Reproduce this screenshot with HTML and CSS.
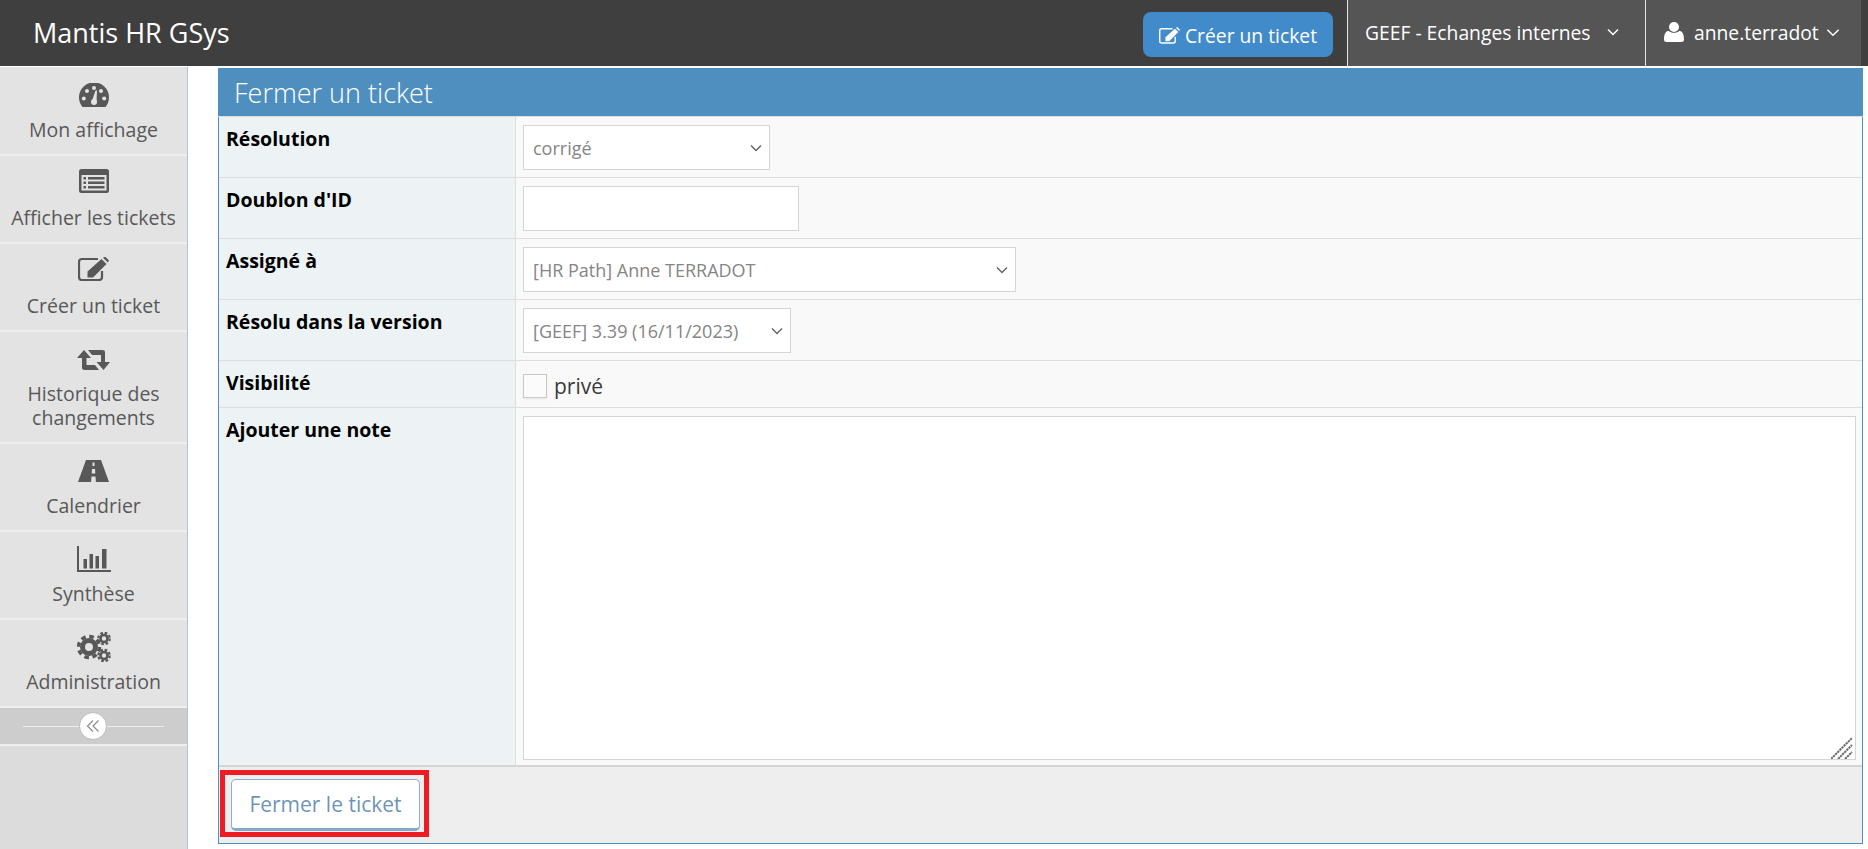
FILE: index.html
```html
<!DOCTYPE html>
<html lang="fr">
<head>
<meta charset="utf-8">
<title>Fermer un ticket</title>
<link rel="stylesheet" href="styles.css">
</head>
<body>
<svg class="sprite" width="0" height="0">
  <symbol id="i-edit" viewBox="0 0 31 24">
    <path d="M24 14v6a3 3 0 0 1-3 3H4a3 3 0 0 1-3-3V5a3 3 0 0 1 3-3h16" fill="none" stroke="currentColor" stroke-width="2.200"/>
    <path d="M9.500 14.500 23.500 2 28.500 7 15 20.500H9.500zM25 .8 27 -.5 31 3.500 29.800 5.500z" fill="currentColor"/>
  </symbol>
</svg>
<header class="topbar">
  <div class="brand">Mantis HR GSys</div>
  <button class="create-btn" type="button"><svg class="create-icon"><use href="#i-edit"/></svg><span>Créer un ticket</span></button>
  <div class="nav-item nav-project"><span>GEEF - Echanges internes</span>
    <svg class="chev" viewBox="0 0 12 8"><path d="M1 1.500 6 6.500 11 1.500" fill="none" stroke="currentColor" stroke-width="1.500"/></svg>
  </div>
  <div class="nav-item nav-user">
    <svg class="user-icon" viewBox="0 0 20 20"><circle cx="10" cy="5" r="5" fill="currentColor"/><path d="M2.500 20A2.500 2.500 0 0 1 0 17.500C0 13 1 9.500 4.500 8.700 6 10 8 10.800 10 10.800s4-.8 5.500-2.100C19 9.500 20 13 20 17.500a2.500 2.500 0 0 1-2.500 2.500z" fill="currentColor"/></svg>
    <span>anne.terradot</span>
    <svg class="chev" viewBox="0 0 12 8"><path d="M1 1.500 6 6.500 11 1.500" fill="none" stroke="currentColor" stroke-width="1.300"/></svg>
  </div>
</header>
<div class="layout">
  <nav class="sidebar">
    <a class="side-item side-item-first">
      <span class="icon-box"><svg class="icon-30" viewBox="0 0 30 24"><path d="M3.500 24A15 15 0 1 1 26.500 24z" fill="#585858"/><g fill="#e3e3e3"><circle cx="4.800" cy="15.500" r="2"/><circle cx="8" cy="8" r="2"/><circle cx="15" cy="5" r="2"/><circle cx="22" cy="8" r="2"/><circle cx="25.200" cy="15.500" r="2"/><circle cx="15" cy="19" r="3"/><path d="M13 18 16.500 7.500h1.500L17.500 19z"/></g></svg></span>
      <span>Mon affichage</span>
    </a>
    <a class="side-item">
      <span class="icon-box"><svg class="icon-30 icon-up" viewBox="0 0 30 24"><rect width="30" height="24" rx="2.500" fill="#585858"/><rect x="2.500" y="6" width="25" height="15.500" fill="#e3e3e3"/><g fill="#585858"><rect x="4.500" y="8" width="2.500" height="2.500"/><rect x="4.500" y="12.500" width="2.500" height="2.500"/><rect x="4.500" y="17" width="2.500" height="2.500"/><rect x="9" y="8" width="16.500" height="2.500"/><rect x="9" y="12.500" width="16.500" height="2.500"/><rect x="9" y="17" width="16.500" height="2.500"/></g></svg></span>
      <span>Afficher les tickets</span>
    </a>
    <a class="side-item">
      <span class="icon-box"><svg class="icon-edit icon-up"><use href="#i-edit"/></svg></span>
      <span>Créer un ticket</span>
    </a>
    <a class="side-item side-item-tall">
      <span class="icon-box"><svg class="icon-retweet" viewBox="0 0 33 20"><path fill="#585858" d="M7 0 14 8H9.500V15H18L22 20H7.500Q5 20 5 18V8H0zM26.500 20 19.500 12H24V5H15L11 0H25.500Q28 0 28 2V12H33z"/></svg></span>
      <span>Historique des<br>changements</span>
    </a>
    <a class="side-item">
      <span class="icon-box"><svg class="icon-road" viewBox="0 0 31 22"><path fill="#585858" d="M0 22 8 0H23L31 22z"/><path fill="#e3e3e3" d="M14.500 2.500h2V6h-2zM14 9h3l.3 4.500h-3.600zM13.500 16.500h4l.4 5.500h-4.800z"/></svg></span>
      <span>Calendrier</span>
    </a>
    <a class="side-item">
      <span class="icon-box"><svg class="icon-chart" viewBox="0 0 34 26"><path fill="#585858" d="M0 0h2v24h32v2H0z"/><g fill="#585858"><rect x="6.500" y="13" width="3.500" height="9.500"/><rect x="12.500" y="8" width="3.500" height="14.500"/><rect x="18.500" y="10" width="3.500" height="12.500"/><rect x="25" y="3" width="4.500" height="19.500"/></g></svg></span>
      <span>Synthèse</span>
    </a>
    <a class="side-item">
      <span class="icon-box"><svg class="icon-cogs" viewBox="0 0 34 30"><g fill="none" stroke="#585858"><circle cx="12" cy="15" r="6.500" stroke-width="5"/><circle cx="12" cy="15" r="10.500" stroke-width="3.500" stroke-dasharray="4.600 3.640"/><circle cx="27" cy="6.500" r="3.500" stroke-width="2.600"/><circle cx="27" cy="6.500" r="5.700" stroke-width="2.200" stroke-dasharray="2.600 1.880"/><circle cx="27" cy="23.500" r="3.500" stroke-width="2.600"/><circle cx="27" cy="23.500" r="5.700" stroke-width="2.200" stroke-dasharray="2.600 1.880"/></g></svg></span>
      <span>Administration</span>
    </a>
    <div class="collapse-bar">
      <span class="collapse-line"></span>
      <span class="collapse-btn"><svg viewBox="0 0 14 14" width="14" height="14"><path d="M7 1.500 1.500 7 7 12.500M12.500 1.500 7 7l5.500 5.500" fill="none" stroke="#8c8c8c" stroke-width="1.200"/></svg></span>
    </div>
  </nav>
  <main class="main">
    <form class="widget">
      <h1 class="widget-title">Fermer un ticket</h1>
      <div class="row row-std">
        <div class="label">Résolution</div>
        <div class="field"><select class="control w-res"><option>corrigé</option></select></div>
      </div>
      <div class="row row-std">
        <div class="label">Doublon d'ID</div>
        <div class="field"><input class="control w-id" type="text"></div>
      </div>
      <div class="row row-std">
        <div class="label">Assigné à</div>
        <div class="field"><select class="control w-assign"><option>[HR Path] Anne TERRADOT</option></select></div>
      </div>
      <div class="row row-std">
        <div class="label">Résolu dans la version</div>
        <div class="field"><select class="control w-ver"><option>[GEEF] 3.39 (16/11/2023)</option></select></div>
      </div>
      <div class="row row-vis">
        <div class="label">Visibilité</div>
        <div class="field field-check"><span class="checkbox"></span><span class="check-label">privé</span></div>
      </div>
      <div class="row row-note">
        <div class="label">Ajouter une note</div>
        <div class="field note-field">
          <textarea class="note"></textarea>
          <svg class="grip" viewBox="0 0 22 22"><path d="M0 22 21 1M7 22 21 8M14 22 21 15" fill="none" stroke="#6e6e6e" stroke-width="2" stroke-dasharray="2.400 .6"/></svg>
        </div>
      </div>
      <div class="footer">
        <div class="highlight"><button class="close-btn" type="button">Fermer le ticket</button></div>
      </div>
    </form>
  </main>
</div>
</body>
</html>
```

FILE: styles.css
```css
* { box-sizing: border-box; }
html, body { margin: 0; height: 849px; overflow: hidden; background: #fff; }
body { font-family: "Open Sans", "Noto Sans", sans-serif; font-size: 19.5px; color: #393939; }
.sprite { position: absolute; }

.topbar { display: flex; align-items: stretch; height: 66px; background: #3f3f3f; padding-right: 7px; color: #fff; font-size: 19.3px; }
.brand { flex: 1; font-size: 27px; line-height: 66px; padding-left: 33px; }
.create-btn { align-self: flex-start; margin: 12px 14px 0 0; height: 45px; width: 190px; padding: 1px 0 0; display: flex; align-items: center; justify-content: center; gap: 5px; background: #428bca; border: 0; border-radius: 8px; color: #fff; font: inherit; }
.create-icon { width: 21px; height: 17px; }
.nav-item { display: flex; align-items: center; background: #555; border-left: 1px solid #e4e4e4; padding-bottom: 2px; white-space: nowrap; }
.nav-project { width: 298px; padding-left: 17px; gap: 16px; }
.nav-user { width: 216px; padding-left: 18px; }
.chev { width: 12px; height: 8px; flex: none; }
.nav-user .chev { margin-left: 7px; width: 14px; height: 9px; }
.user-icon { width: 20px; height: 20px; margin-right: 10px; flex: none; }

.layout { display: flex; height: 783px; margin-top: 1px; }
.sidebar { width: 188px; flex: none; background: #dcdcdc; border-right: 1px solid #a9c5dc; }
.side-item { display: flex; flex-direction: column; align-items: center; height: 88px; background: #e3e3e3; border-bottom: 2px solid #efefef; color: #585858; text-align: center; line-height: 24px; padding-top: 11px; }
.side-item-first { height: 89px; padding-top: 12px; }
.side-item-tall { height: 112px; }
.icon-box { display: flex; align-items: center; justify-content: center; height: 31px; margin-bottom: 8px; flex: none; color: #585858; }
.icon-30 { width: 30px; height: 24px; }
.icon-up { margin-bottom: 3px; }
.icon-edit { width: 31px; height: 24px; }
.icon-retweet { width: 33px; height: 20px; margin-top: 2px; }
.icon-road { width: 31px; height: 22px; }
.icon-chart { width: 34px; height: 26px; }
.icon-cogs { width: 34px; height: 30px; }
.collapse-bar { position: relative; height: 38px; background: #cdcdcd; border-bottom: 2px solid #efefef; display: flex; align-items: center; justify-content: center; }
.collapse-line { width: 141px; height: 1px; background: #eee; }
.collapse-btn { position: absolute; left: 79px; top: 4px; width: 28px; height: 28px; border-radius: 50%; background: #fff; border: 1px solid #bbb; display: flex; align-items: center; justify-content: center; }

.main { flex: 1; padding: 1px 5px 0 30px; min-width: 0; }
.widget { display: flex; flex-direction: column; border: solid #4f8fc0; border-width: 0 1px 1px 1px; height: 776px; }
.widget-title { margin: 0 -1px; height: 49px; background: #4f8fc0; border-bottom: 1px solid #dddddd; color: #fff; font-size: 27px; font-weight: 300; line-height: 49px; padding-left: 16px; }
.row { display: flex; border-bottom: 1px solid #dddddd; }
.row-std { height: 61px; }
.row-vis { height: 47px; }
.row-note { height: 359px; border-bottom: 2px solid #d5d5d5; }
.label { width: 297px; flex: none; background: #edf3f4; border-right: 1px solid #dddddd; padding: 10px 7px; font-weight: 700; color: #000; line-height: 24px; }
.field { flex: 1; background: #f9f9f9; padding: 8px 6px 0 7px; }
.control { display: block; height: 45px; background: #fff; border: 1px solid #d5d5d5; border-radius: 0; font: inherit; font-size: 18px; color: #858585; padding: 0 9px; appearance: none; }
select.control { background-image: url("data:image/svg+xml,%3Csvg xmlns='http://www.w3.org/2000/svg' width='12' height='8'%3E%3Cpath d='M1 1.500 6 6.500 11 1.500' fill='none' stroke='%23666' stroke-width='1.500'/%3E%3C/svg%3E"); background-repeat: no-repeat; background-position: right 7px center; }
.w-res { width: 247px; }
.w-id { width: 276px; }
.w-assign { width: 493px; }
.w-ver { width: 268px; }
.field-check { display: flex; align-items: flex-start; gap: 7px; padding-top: 13px; }
.checkbox { width: 24px; height: 24px; background: #fbfbfb; border: 1px solid #c8c8c8; box-shadow: 0 1px 2px rgba(0,0,0,.08); }
.check-label { font-size: 21px; line-height: 24px; color: #393939; }
.note-field { position: relative; padding-top: 8px; }
.note { display: block; width: 100%; height: 344px; background: #fff; border: 1px solid #d5d5d5; resize: none; }
.grip { position: absolute; right: 9px; bottom: 6px; width: 22px; height: 22px; }
.footer { flex: 1; background: #eeeeee; padding: 3px 0 0 1px; }
.highlight { width: 209px; height: 67px; border: 5px solid #ed1c24; padding: 4px 6px; }
.close-btn { display: block; width: 189px; height: 52px; background: #fff; border: 1px solid #8db0d0; border-bottom: 3px solid #84a9cc; border-radius: 5px; font: inherit; color: #6f94b8; font-size: 21px; padding: 0; }
```
